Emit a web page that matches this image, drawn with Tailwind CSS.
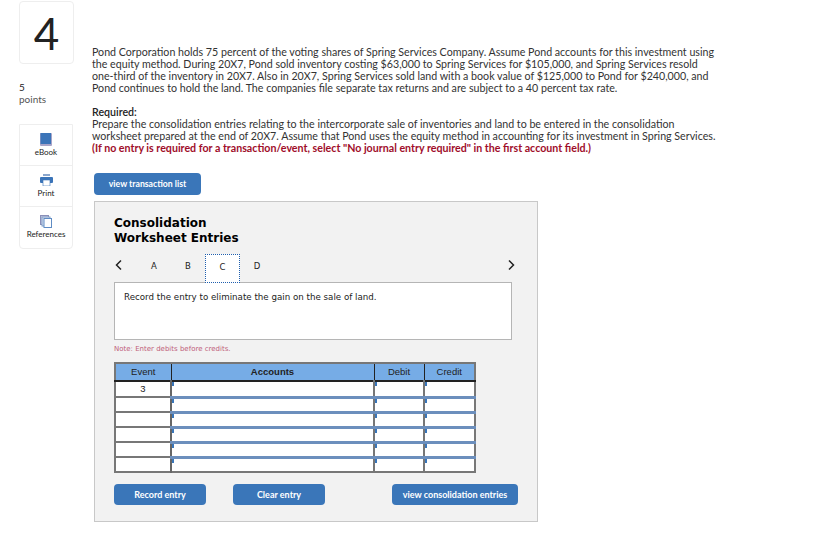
<!DOCTYPE html>
<html lang="en">

<head>
    <meta charset="UTF-8">
    <meta name="viewport" content="width=device-width, initial-scale=1.0">
    <title>Consolidation Worksheet Entries</title>
    <script src="https://cdn.jsdelivr.net/npm/@tailwindcss/browser@4"></script>
</head>

<body class="bg-white font-['Lato',sans-serif] text-[#333]">
    <div class="flex items-start w-[823px] h-[533px] overflow-hidden">

        <!-- left column -->
        <div class="w-[55px] ml-[19px] mt-[1px] shrink-0">
            <div class="h-[63px] border border-[#eee] rounded flex items-center justify-center text-[44px] leading-none text-[#222]">4</div>
            <div class="mt-[17px] text-[10px] leading-[12px] text-[#222]">5</div>
            <div class="text-[10px] leading-[12px] text-[#555]">points</div>

            <div class="mt-[19px] border border-[#eee] rounded-b w-[54px]">
                <div class="h-[41px] flex flex-col items-center pt-[8px] border-b border-[#eee]">
                    <svg width="12" height="13" viewBox="0 0 12 13"><rect x="0" y="0" width="12" height="13" rx="1" fill="#a8a4c8"/><rect x="0.5" y="0" width="10.5" height="11" fill="#3b74b8"/></svg>
                    <span class="text-[8px] leading-[10px] mt-[1px] text-[#222]">eBook</span>
                </div>
                <div class="h-[41px] flex flex-col items-center pt-[8px] border-b border-[#eee]">
                    <svg width="13" height="12" viewBox="0 0 13 12"><rect x="3" y="0" width="7" height="2" fill="#8aa6cc"/><rect x="0" y="3" width="13" height="6" rx="1" fill="#3b74b8"/><rect x="3" y="6" width="7" height="6" fill="#fff" stroke="#3b74b8" stroke-width="0.6"/></svg>
                    <span class="text-[8px] leading-[10px] mt-[2px] text-[#222]">Print</span>
                </div>
                <div class="h-[41px] flex flex-col items-center pt-[8px]">
                    <svg width="12" height="13" viewBox="0 0 12 13"><rect x="0.5" y="0.5" width="8" height="9" fill="#c9c6e0" stroke="#8a8fb8"/><rect x="2" y="2" width="8" height="9" fill="#dfe3f0" stroke="#7f9fc8"/><rect x="4" y="3.5" width="7.5" height="9" fill="#fff" stroke="#5f8cc4"/></svg>
                    <span class="text-[8px] leading-[10px] mt-[1px] text-[#222]">References</span>
                </div>
            </div>
        </div>

        <!-- main column -->
        <div class="ml-[18px] mt-[46px] w-[640px]">
            <p class="text-[10.67px] leading-[12px] text-[#333]">Pond Corporation holds 75 percent of the voting shares of Spring Services Company. Assume Pond accounts for this investment using<br>the equity method. During 20X7, Pond sold inventory costing $63,000 to Spring Services for $105,000, and Spring Services resold<br>one-third of the inventory in 20X7. Also in 20X7, Spring Services sold land with a book value of $125,000 to Pond for $240,000, and<br>Pond continues to hold the land. The companies file separate tax returns and are subject to a 40 percent tax rate.</p>

            <p class="mt-[12px] text-[10.67px] leading-[12px] font-semibold text-[#222]">Required:</p>
            <p class="text-[10.67px] leading-[12px] text-[#333]">Prepare the consolidation entries relating to the intercorporate sale of inventories and land to be entered in the consolidation<br>worksheet prepared at the end of 20X7. Assume that Pond uses the equity method in accounting for its investment in Spring Services.</p>
            <p class="text-[10.67px] leading-[12px] font-bold text-[#a00d2a]">(If no entry is required for a transaction/event, select "No journal entry required" in the first account field.)</p>

            <button class="mt-[19px] ml-[2px] block w-[107px] h-[22px] bg-[#3a76b9] rounded-sm text-white text-[8.7px] font-bold">view transaction list</button>

            <!-- worksheet panel -->
            <div class="mt-[6px] ml-[2px] w-[444px] h-[321px] bg-[#f2f2f2] border border-[#c8c8c8] px-[19px] pt-[14px]">
                <h2 class="font-['DejaVu_Sans',sans-serif] font-bold text-[12px] leading-[15px] text-black">Consolidation<br>Worksheet Entries</h2>

                <div class="mt-[8px] w-[398px] h-[28px] flex items-start font-['DejaVu_Sans',sans-serif] text-[8.5px] text-[#222]">
                    <svg class="mt-[5px]" width="10" height="12" viewBox="0 0 10 12"><path d="M7 1.5 L2.5 6 L7 10.5" fill="none" stroke="#222" stroke-width="1.5"/></svg>
                    <span class="w-[34px] ml-[13px] pt-[6px] text-center">A</span>
                    <span class="w-[34px] pt-[6px] text-center">B</span>
                    <span class="w-[35px] h-[29px] pt-[6px] text-center bg-white border border-dotted border-[#1f5fae]">C</span>
                    <span class="w-[34px] pt-[6px] text-center">D</span>
                    <svg class="ml-auto -mr-[4px] mt-[5px]" width="10" height="12" viewBox="0 0 10 12"><path d="M3 1.5 L7.5 6 L3 10.5" fill="none" stroke="#222" stroke-width="1.5"/></svg>
                </div>

                <div class="w-[398px] h-[58px] bg-white border border-[#b5b5b5] px-[9px] pt-[8px] font-['DejaVu_Sans',sans-serif] text-[8.7px] leading-[12px] text-[#222]">Record the entry to eliminate the gain on the sale of land.</div>

                <p class="mt-[5px] font-['DejaVu_Sans',sans-serif] text-[7px] leading-[8px] text-[#c0607a]">Note: Enter debits before credits.</p>

                <!-- entry table -->
                <table class="mt-[9px] w-[360px] h-[110px] table-fixed border-collapse border-2 border-[#777] font-['Liberation_Sans',sans-serif] text-[9.5px] text-[#222]">
                    <colgroup>
                        <col class="w-[56px]">
                        <col class="w-[203px]">
                        <col class="w-[50px]">
                        <col class="w-[51px]">
                    </colgroup>
                    <thead>
                        <tr class="h-[18px] bg-[#76ace6] border-b-2 border-[#222]">
                            <th class="font-normal border-r border-[#222]">Event</th>
                            <th class="font-bold border-r border-[#222]">Accounts</th>
                            <th class="font-normal border-r border-[#222]">Debit</th>
                            <th class="font-normal">Credit</th>
                        </tr>
                    </thead>
                    <tbody class="bg-white">
                        <tr class="h-[15px] border-b-2 border-[#777]">
                            <td class="text-center border-r-2 border-[#666]">3</td>
                            <td class="border-r-2 border-[#777] border-b-[3px] border-b-[#6c8fbd] relative"><span class="absolute left-0 top-0 w-[2px] h-[4px] bg-[#3a76b9]"></span></td>
                            <td class="border-r-2 border-[#777] border-b-[3px] border-b-[#6c8fbd] relative"><span class="absolute left-0 top-0 w-[2px] h-[4px] bg-[#3a76b9]"></span></td>
                            <td class="border-b-[3px] border-b-[#6c8fbd] relative"><span class="absolute left-0 top-0 w-[2px] h-[4px] bg-[#3a76b9]"></span></td>
                        </tr>
                        <tr class="h-[15px] border-b-2 border-[#777]">
                            <td class="border-r-2 border-[#666]"></td>
                            <td class="border-r-2 border-[#777] border-b-[3px] border-b-[#6c8fbd] relative"><span class="absolute left-0 top-0 w-[2px] h-[4px] bg-[#3a76b9]"></span></td>
                            <td class="border-r-2 border-[#777] border-b-[3px] border-b-[#6c8fbd] relative"><span class="absolute left-0 top-0 w-[2px] h-[4px] bg-[#3a76b9]"></span></td>
                            <td class="border-b-[3px] border-b-[#6c8fbd] relative"><span class="absolute left-0 top-0 w-[2px] h-[4px] bg-[#3a76b9]"></span></td>
                        </tr>
                        <tr class="h-[15px] border-b-2 border-[#777]">
                            <td class="border-r-2 border-[#666]"></td>
                            <td class="border-r-2 border-[#777] border-b-[3px] border-b-[#6c8fbd] relative"><span class="absolute left-0 top-0 w-[2px] h-[4px] bg-[#3a76b9]"></span></td>
                            <td class="border-r-2 border-[#777] border-b-[3px] border-b-[#6c8fbd] relative"><span class="absolute left-0 top-0 w-[2px] h-[4px] bg-[#3a76b9]"></span></td>
                            <td class="border-b-[3px] border-b-[#6c8fbd] relative"><span class="absolute left-0 top-0 w-[2px] h-[4px] bg-[#3a76b9]"></span></td>
                        </tr>
                        <tr class="h-[15px] border-b-2 border-[#777]">
                            <td class="border-r-2 border-[#666]"></td>
                            <td class="border-r-2 border-[#777] border-b-[3px] border-b-[#6c8fbd] relative"><span class="absolute left-0 top-0 w-[2px] h-[4px] bg-[#3a76b9]"></span></td>
                            <td class="border-r-2 border-[#777] border-b-[3px] border-b-[#6c8fbd] relative"><span class="absolute left-0 top-0 w-[2px] h-[4px] bg-[#3a76b9]"></span></td>
                            <td class="border-b-[3px] border-b-[#6c8fbd] relative"><span class="absolute left-0 top-0 w-[2px] h-[4px] bg-[#3a76b9]"></span></td>
                        </tr>
                        <tr class="h-[15px] border-b-2 border-[#777]">
                            <td class="border-r-2 border-[#666]"></td>
                            <td class="border-r-2 border-[#777] border-b-[3px] border-b-[#6c8fbd] relative"><span class="absolute left-0 top-0 w-[2px] h-[4px] bg-[#3a76b9]"></span></td>
                            <td class="border-r-2 border-[#777] border-b-[3px] border-b-[#6c8fbd] relative"><span class="absolute left-0 top-0 w-[2px] h-[4px] bg-[#3a76b9]"></span></td>
                            <td class="border-b-[3px] border-b-[#6c8fbd] relative"><span class="absolute left-0 top-0 w-[2px] h-[4px] bg-[#3a76b9]"></span></td>
                        </tr>
                        <tr class="h-[15px]">
                            <td class="border-r-2 border-[#666]"></td>
                            <td class="border-r-2 border-[#777] relative"><span class="absolute left-0 top-0 w-[2px] h-[4px] bg-[#3a76b9]"></span></td>
                            <td class="border-r-2 border-[#777] relative"><span class="absolute left-0 top-0 w-[2px] h-[4px] bg-[#3a76b9]"></span></td>
                            <td class="relative"><span class="absolute left-0 top-0 w-[2px] h-[4px] bg-[#3a76b9]"></span></td>
                        </tr>
                    </tbody>
                </table>

                <div class="mt-[11px] flex text-white text-[9px] font-bold">
                    <button class="w-[92px] h-[21px] bg-[#3a76b9] rounded-sm">Record entry</button>
                    <button class="ml-[27px] w-[92px] h-[21px] bg-[#3a76b9] rounded-sm">Clear entry</button>
                    <button class="ml-[67px] w-[126px] h-[21px] bg-[#3a76b9] rounded-sm">view consolidation entries</button>
                </div>
            </div>
        </div>
    </div>
</body>

</html>
